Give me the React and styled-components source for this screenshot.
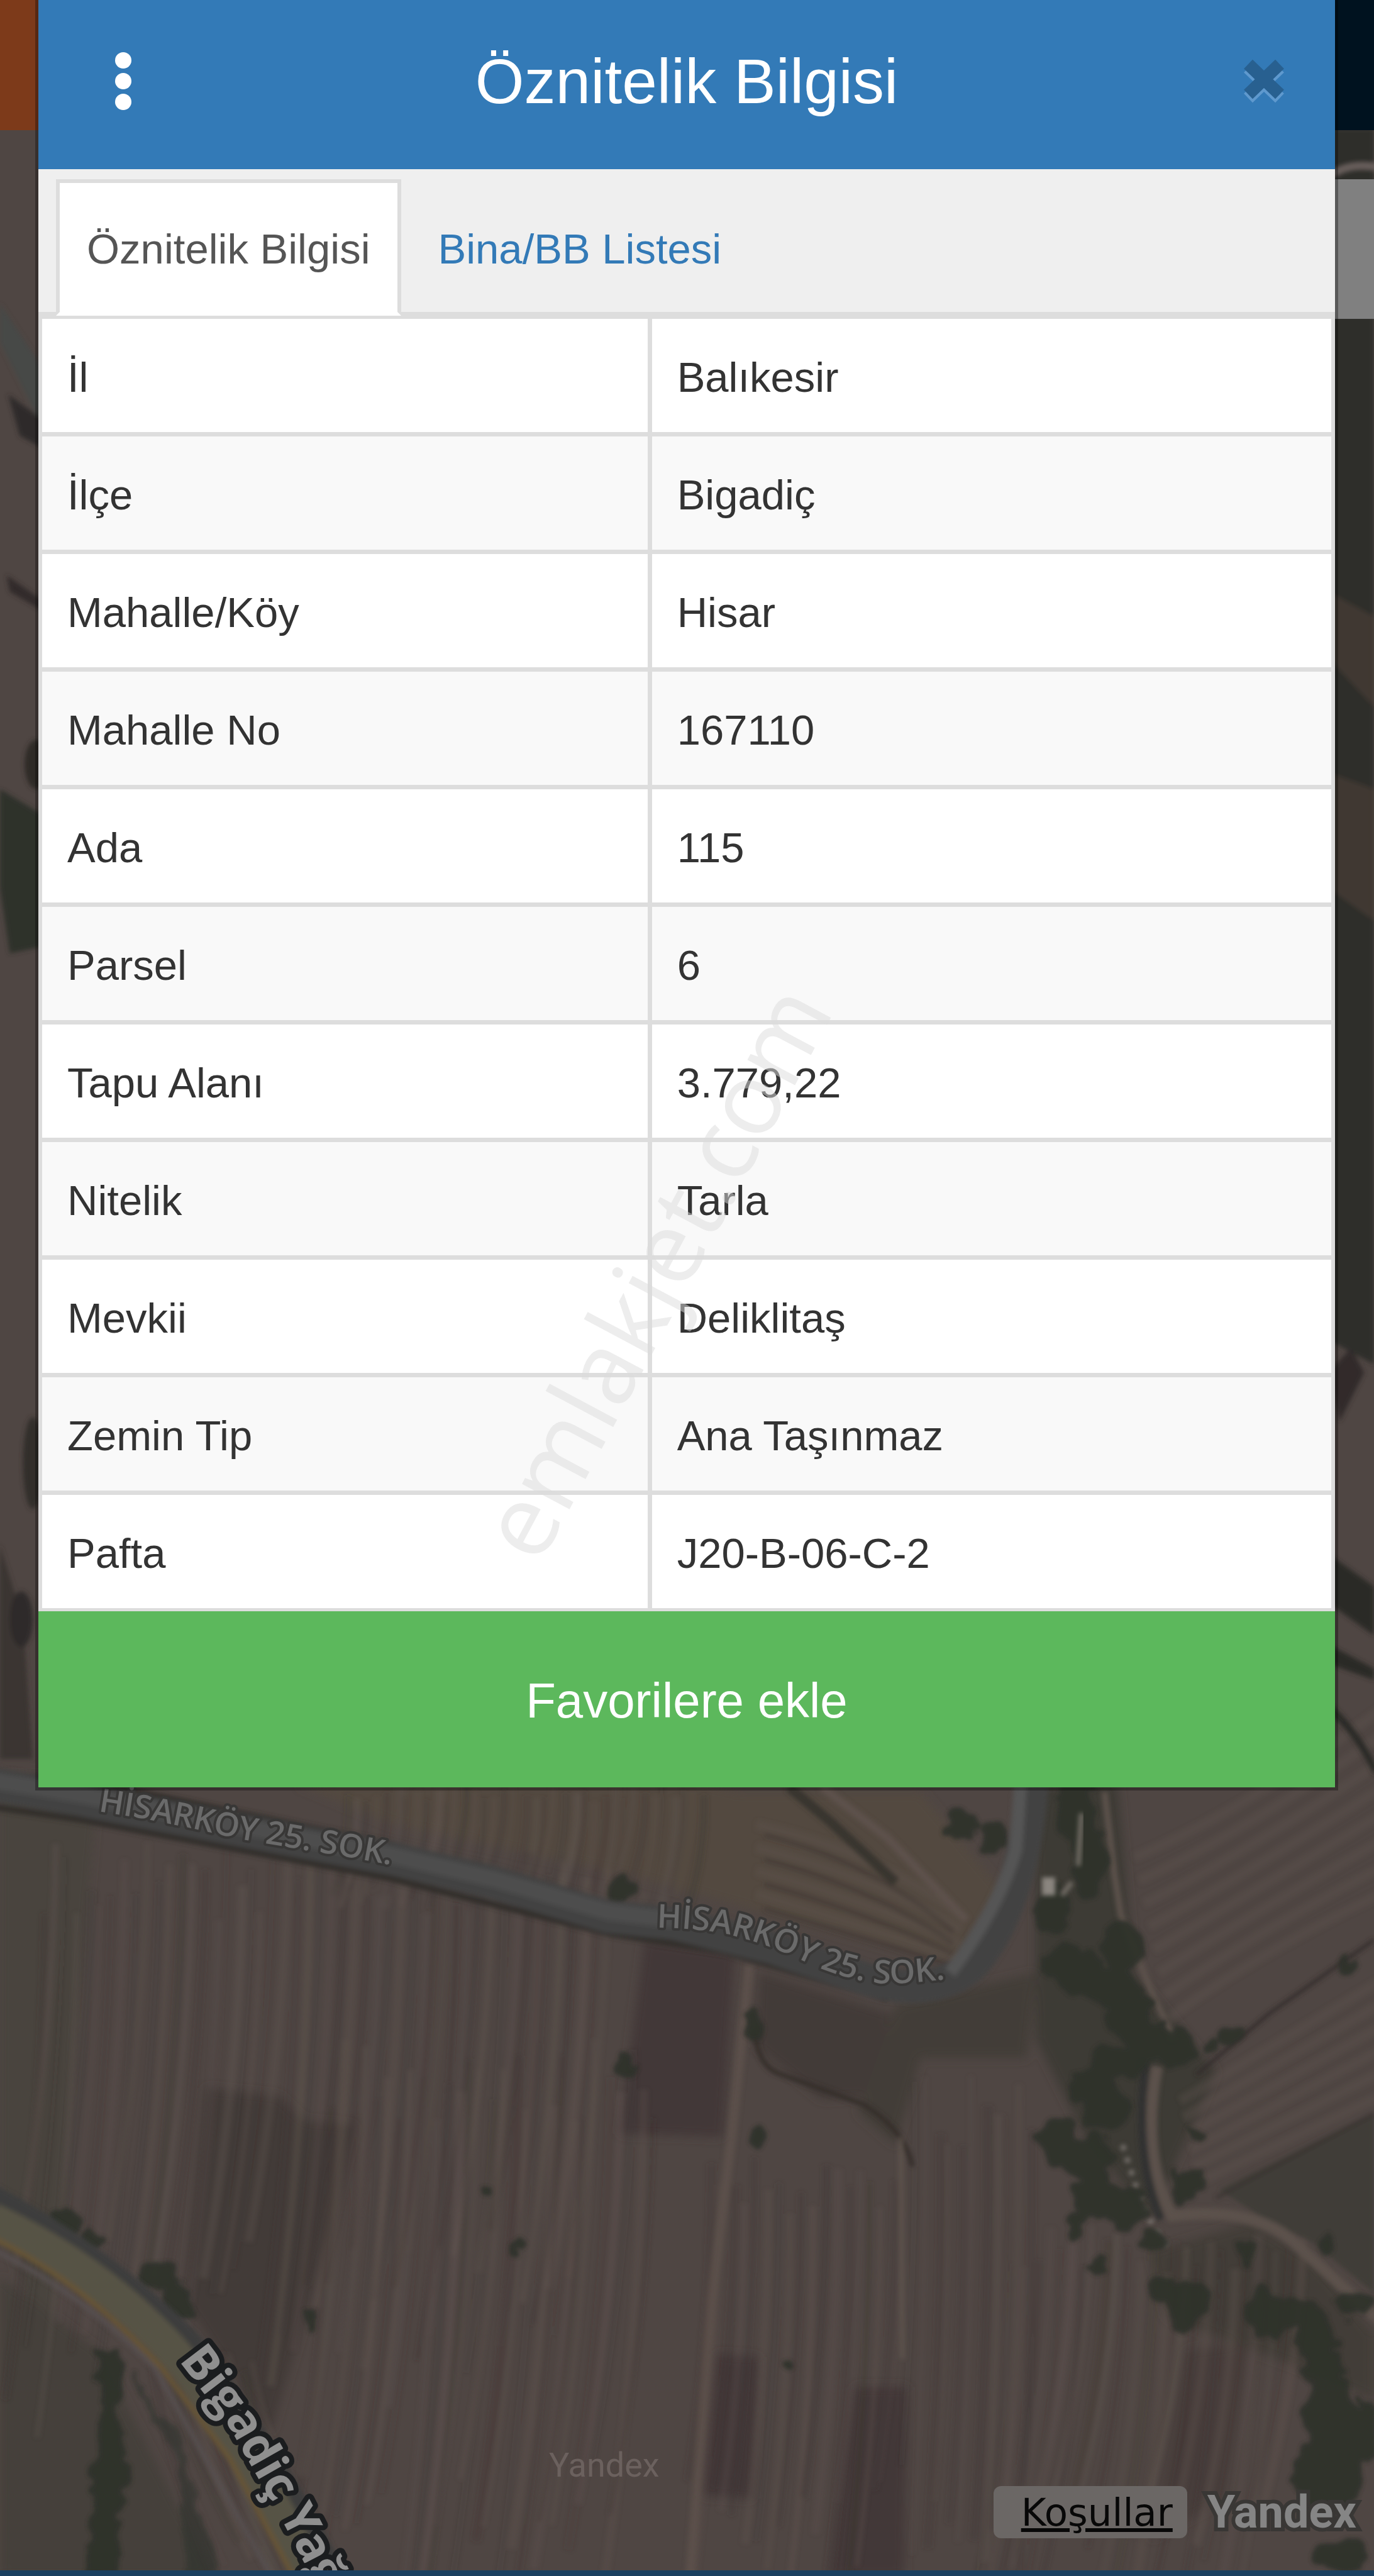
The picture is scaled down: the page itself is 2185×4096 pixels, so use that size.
import { useState } from "react";
import styled, { createGlobalStyle } from "styled-components";

const rows = [
  ['İl', 'Balıkesir'],
  ['İlçe', 'Bigadiç'],
  ['Mahalle/Köy', 'Hisar'],
  ['Mahalle No', '167110'],
  ['Ada', '115'],
  ['Parsel', '6'],
  ['Tapu Alanı', '3.779,22'],
  ['Nitelik', 'Tarla'],
  ['Mevkii', 'Deliklitaş'],
  ['Zemin Tip', 'Ana Taşınmaz'],
  ['Pafta', 'J20-B-06-C-2'],
];

const rnd = (i) => {
  const v = Math.sin(i * 127.1 + 11.7) * 43758.5453;
  return v - Math.floor(v);
}

// plough lines of a field: dx is how far a line leans over its length
const Furrows = ({ x, y, w, h, dx, step = 7, seed = 1, angle = 0 }) => {
  const lines = [];
  for (let i = 0; i * step < w; i++) {
    const r = rnd(i + seed * 31);
    const sx = x + i * step + r * 4;
    const top = y + rnd(i + seed * 57) * h * 0.15;
    const len = h * (0.7 + rnd(i + seed * 13) * 0.3);
    lines.push(
      <path
        key={i}
        d={`M${sx} ${top} q${dx * 0.2 + 3} ${len / 2} ${dx} ${len}`}
        stroke={i % 2 ? '#665a54' : '#3d3432'}
        strokeWidth={2 + r * 4}
        opacity={0.1 + rnd(i + seed * 77) * 0.25}
      />
    );
  }
  return <g fill="none" transform={`rotate(${angle} ${x} ${y})`}>{lines}</g>;
}

const trees = [
  [378, 1149, 10, 8], [381, 1257, 7, 8], [459, 1233, 6, 9], [460, 1301, 7, 7],
  [296, 1333, 4, 4], [315, 1367, 3, 5], [189, 1410, 4, 5], [40, 1350, 10, 9],
  [56, 1363, 8, 7], [98, 1386, 14, 9], [108, 1400, 9, 10], [480, 1440, 4, 5],
  [585, 1110, 11, 9], [604, 1118, 9, 12], [655, 1100, 13, 22], [663, 1130, 10, 26],
  [641, 1162, 11, 14], [682, 1184, 13, 15], [652, 1198, 18, 15], [675, 1209, 20, 12],
  [686, 1225, 13, 13], [697, 1240, 14, 13], [716, 1247, 12, 12], [680, 1256, 16, 10],
  [664, 1268, 15, 12], [673, 1285, 14, 14], [645, 1302, 13, 15], [664, 1312, 16, 13],
  [667, 1336, 15, 14], [686, 1345, 13, 13], [655, 1354, 7, 10], [701, 1363, 8, 7],
  [668, 1377, 5, 6], [722, 1328, 10, 11], [728, 1298, 4, 4], [748, 1238, 7, 6],
  [738, 1244, 5, 4], [707, 1392, 9, 8], [722, 1402, 14, 14], [771, 1408, 13, 15],
  [790, 1408, 14, 11], [757, 1371, 5, 7], [800, 1424, 13, 14], [804, 1440, 13, 10],
  [808, 1470, 17, 25], [806, 1505, 20, 22], [815, 1497, 15, 30], [830, 1480, 8, 20],
  [824, 1400, 12, 9], [806, 1363, 5, 6], [817, 1555, 18, 10], [820, 1195, 5, 5],
];

const Terrain = () => (
  <Fill viewBox="0 0 836 1567" preserveAspectRatio="xMidYMid slice" aria-hidden="true">
    <defs>
      <filter id="soft" x="-5%" y="-5%" width="110%" height="110%"><feGaussianBlur stdDeviation="1.4" /></filter>
      <filter id="softer" x="-5%" y="-5%" width="110%" height="110%"><feGaussianBlur stdDeviation="3" /></filter>
      <filter id="rough" x="-5%" y="-5%" width="110%" height="110%">
        <feTurbulence type="fractalNoise" baseFrequency="0.08" numOctaves="2" seed="4" />
        <feDisplacementMap in="SourceGraphic" scale="14" xChannelSelector="R" yChannelSelector="G" />
        <feGaussianBlur stdDeviation="1.2" />
      </filter>
    </defs>
    <rect width="836" height="1567" fill="#4f4643" />

    <g filter="url(#softer)">
      <path d="M0 1080H60L30 1440L0 1350Z" fill="#47433d" opacity=".7" />
      <path d="M125 1270L170 1275L185 1290L216 1293L200 1360L165 1480L112 1400Z" fill="#433a38" />
      <path d="M392 1180L447 1188L440 1300L377 1298Z" fill="#433937" />
      <path d="M436 1432L462 1434L458 1520L427 1518Z" fill="#433937" />
      <path d="M520 1452L552 1452L550 1567L505 1567Z" fill="#433937" />
      <path d="M722 1430L760 1425L745 1520L700 1545Z" fill="#463d3b" />
      <path d="M462 1200L542 1225L530 1275L500 1277L460 1245Z" fill="#433a37" />
      <path d="M545 1220L630 1200L625 1252L560 1252L545 1305L522 1285Z" fill="#423e37" />
      <path d="M630 1085H680L690 1200L740 1260L700 1350L660 1300L630 1240Z" fill="#3d3a35" />
      <path d="M700 1370L760 1352L800 1375L836 1420V1460L790 1440L710 1410Z" fill="#433e38" />
      <path d="M0 1385L60 1430L130 1567H0Z" fill="#443f3b" />
      <path d="M180 1085L430 1085L450 1090L560 1090L610 1150L580 1195L470 1165L380 1140L240 1110Z" fill="#53483f" />
    </g>

    <g filter="url(#soft)">
      <Furrows x={25} y={1120} w={350} h={320} dx={-24} seed={2} />
      <Furrows x={200} y={1240} w={200} h={340} dx={-26} seed={3} />
      <Furrows x={210} y={1085} w={220} h={75} dx={-10} seed={4} step={6} />
      <Furrows x={430} y={1310} w={120} h={260} dx={-14} seed={5} />
      <Furrows x={555} y={1262} w={75} h={300} dx={-8} seed={6} />
      <Furrows x={615} y={1350} w={180} h={220} dx={-24} seed={7} />
      <Furrows x={90} y={1430} w={70} h={140} dx={40} seed={8} />
      <g fill="none" stroke="#62564f" strokeWidth="6" opacity=".3">
        {[0, 1, 2, 3, 4, 5, 6, 7].map(i => <path key={i} d={`M${690 + i * 3} ${1130 + i * 14} Q760 ${1100 + i * 13} 840 ${1040 + i * 16}`} />)}
        {[0, 1, 2, 3, 4, 5].map(i => <path key={i} d={`M${718 + i * 2} ${1278 + i * 10} L840 ${1205 + i * 14}`} />)}
        {[0, 1, 2, 3].map(i => <path key={i} d={`M460 ${1110 + i * 14} Q530 ${1125 + i * 16} 585 ${1165 + i * 9}`} />)}
      </g>
      <g fill="none" stroke="#3a312f" strokeWidth="3" opacity=".4">
        {[0, 1, 2, 3].map(i => <path key={i} d={`M465 ${1116 + i * 15} Q530 ${1132 + i * 16} 580 ${1175 + i * 7}`} />)}
      </g>
      <path d="M500 1087L540 1118L588 1168" fill="none" stroke="#5d514b" strokeWidth="5" />
      <path d="M480 1087L505 1108L545 1145" fill="none" stroke="#38342e" strokeWidth="6" />
      <path d="M742 1332L836 1285V1395L800 1365L770 1350Z" fill="#403d38" />
      <path d="M456 1195L445 1300L433 1400L420 1567" fill="none" stroke="#63564f" strokeWidth="6" opacity=".6" />
      <path d="M459 1235Q461 1256 473 1261L525 1280Q551 1296 555 1318" fill="none" stroke="#352e2b" strokeWidth="3" />
      <path d="M548 1300L549 1435" fill="none" stroke="#665a52" strokeWidth="3" opacity=".6" />
      <path d="M836 1180L772 1225L728 1262" fill="none" stroke="#332c2a" strokeWidth="2" />
      <path d="M836 1286L740 1337" fill="none" stroke="#3a3431" strokeWidth="2" />
      <path d="M672 1090L678 1140L682 1165L700 1210L714 1240" fill="none" stroke="#5b514b" strokeWidth="4" />
      <path d="M704 1257Q694 1310 713 1348Q760 1342 785 1362L840 1412" fill="none" stroke="#5b514c" strokeWidth="7" />
      <path d="M697 1255Q690 1310 706 1350" fill="none" stroke="#303130" strokeWidth="5" />
      <path d="M683 1305L696 1345L712 1370" fill="none" stroke="#7d7772" strokeWidth="3" strokeDasharray="3 5" />
    </g>

    <g filter="url(#rough)" fill="#2f302c" opacity=".92">
      {trees.map(([x, y, rx, ry]) => <ellipse key={`${x}-${y}`} cx={x} cy={y} rx={rx} ry={ry} />)}
      <path d="M60 1430L76 1430L72 1470L78 1500L70 1567H54L56 1500L62 1470Z" />
      <path d="M80 1443L108 1480L120 1520L132 1567H114L108 1500Z" opacity=".6" />
    </g>
    <g filter="url(#soft)">
      <path d="M658 1103L656 1135M652 1145L646 1153" stroke="#706a63" strokeWidth="3" fill="none" />
      <rect x="634" y="1142" width="8" height="11" fill="#8a857f" />
    </g>

    <g filter="url(#soft)" fill="none">
      <path d="M-5 1078L60 1085L240 1122L370 1158L420 1163" stroke="#2e2a28" strokeWidth="3" />
      <path d="M-5 1099L50 1107L235 1142L370 1176L440 1187L540 1216" stroke="#332e2c" strokeWidth="4" />
      <path d="M-5 1085L50 1095L150 1114L240 1131L300 1145L370 1166L410 1170L470 1185L530 1205Q570 1215 592 1195Q622 1160 628 1085" stroke="#424342" strokeWidth="20" />
      <path d="M-5 1083L50 1092L240 1129L300 1143L370 1163L410 1168" stroke="#4e4e4e" strokeWidth="10" />
      <path d="M578 1200Q608 1160 618 1125L621 1085" stroke="#555455" strokeWidth="8" />
      <path d="M-5 1336Q60 1370 115 1424Q165 1490 205 1570" stroke="#3c3e3d" strokeWidth="14" />
      <path d="M-5 1368Q50 1395 94 1440L165 1567" stroke="#574f4f" strokeWidth="3" />
      <path d="M-5 1350Q60 1380 107 1432Q150 1485 190 1570" stroke="#575345" strokeWidth="20" />
      <path d="M-5 1361Q50 1388 98 1440L140 1496L180 1570" stroke="#675535" strokeWidth="3" />
    </g>

    {/* slivers of the map on both sides of the dialog */}
    <g filter="url(#soft)">
      <path d="M0 185L30 230V268L0 208Z" fill="#464847" />
      <path d="M5 240L30 258V275L12 265Z" fill="#2e2c29" />
      <path d="M4 350L30 368V374L6 360Z" fill="#302b29" />
      <ellipse cx="22" cy="465" rx="7" ry="15" fill="#2e2a28" />
      <path d="M0 480L30 498V575L6 580L0 540Z" fill="#2d302a" />
      <ellipse cx="20" cy="890" rx="6" ry="28" fill="#322d2a" />
      <path d="M0 940L14 985L20 1070H0Z" fill="#3b3532" />
      <ellipse cx="13" cy="985" rx="7" ry="17" fill="#2f2b29" />
      <path d="M808 78H836V830L808 815Z" fill="#2e2d2a" />
      <path d="M808 108Q820 98 840 102" stroke="#6b615d" strokeWidth="4" fill="none" />
      <path d="M808 360L836 375V430L808 400ZM808 470L836 480V560L808 540Z" fill="#3f3733" />
      <path d="M808 945L836 965V995L808 975ZM808 1000L836 1015L836 1022L808 1012ZM808 1035Q826 1050 838 1075L836 1080Q822 1052 808 1042Z" fill="#2c2a28" />
      <path d="M808 835L822 820L830 835L815 865Z" fill="#302c2a" />
    </g>
  </Fill>
);

const Labels = () => (
  <Fill viewBox="0 0 2185 4096" preserveAspectRatio="xMidYMid slice" aria-hidden="true">
    <defs>
      <path id="street1" d="M156 2880L230 2892L300 2906L380 2924L481 2941L544 2951L700 2980" />
      <path id="street2" d="M1044 3065Q1105 3066 1154 3075Q1210 3088 1269 3114Q1340 3149 1405 3154Q1450 3155 1560 3140" />
      <path id="avenue" d="M284 3753L364 3858L411 3941L450 4010L520 4145" />
    </defs>
    <Street><textPath href="#street1">HİSARKÖY 25. SOK.</textPath></Street>
    <Street><textPath href="#street2">HİSARKÖY 25. SOK.</textPath></Street>
    <Avenue><textPath href="#avenue">Bigadiç Yağ</textPath></Avenue>
    <Faint x="873" y="3938">Yandex</Faint>
  </Fill>
);

const App = () => {
  const [tab, setTab] = useState('info');

  return (
    <>
      <GlobalStyle />
      <Page>
        <Backdrop>
          <Terrain />
          <Labels />
          <TopBar />
          <SideBox />
        </Backdrop>

        <Dialog role="dialog" aria-labelledby="title">
          <Header>
            <IconButton aria-label="Menü">
              <svg width="70" height="100" viewBox="0 0 70 100" fill="#fff">
                <circle cx="35" cy="17" r="13" />
                <circle cx="35" cy="50" r="13" />
                <circle cx="35" cy="83" r="13" />
              </svg>
            </IconButton>
            <Title id="title">Öznitelik Bilgisi</Title>
            <IconButton aria-label="Kapat" $end>
              <svg width="70" height="76" viewBox="0 0 70 76" fill="none" strokeWidth="20" strokeLinejoin="round">
                <path d="M10 17L60 65M60 17L10 65" stroke="#5f99ce" />
                <path d="M10 11L60 59M60 11L10 59" stroke="#286090" />
              </svg>
            </IconButton>
          </Header>

          <Tabs role="tablist">
            <Tab role="tab" aria-selected={tab === 'info'} $on={tab === 'info'} onClick={() => setTab('info')}>Öznitelik Bilgisi</Tab>
            <Tab role="tab" aria-selected={tab === 'list'} $on={tab === 'list'} onClick={() => setTab('list')}>Bina/BB Listesi</Tab>
          </Tabs>

          <Table>
            <tbody>
              {rows.map(([name, value]) => (
                <Row key={name}>
                  <Name scope="row">{name}</Name>
                  <Value>{value}</Value>
                </Row>
              ))}
            </tbody>
          </Table>

          <AddButton>Favorilere ekle</AddButton>
        </Dialog>

        <Copyright>
          <Terms href="#kosullar">Koşullar</Terms>
          <Brand>Yandex</Brand>
        </Copyright>
        <BottomBar />

        <Watermark viewBox="0 0 2185 4096" preserveAspectRatio="xMidYMid slice" aria-hidden="true">
          <text transform="translate(857 2491) rotate(-62)">emlakjet.com</text>
        </Watermark>
      </Page>
    </>
  )
}

const GlobalStyle = createGlobalStyle`
  * {
    box-sizing: border-box;
  }
  body {
    margin: 0;
    background: #4f4643;
    font-family: "Liberation Sans", Arial, sans-serif;
  }
  button {
    font-family: inherit;
    border: 0;
    cursor: pointer;
  }
`

const Page = styled.main`
  position: relative;
  min-height: 100vh;
  display: flex;
  flex-direction: column;
  overflow: hidden;
`

const Backdrop = styled.div`
  position: absolute;
  inset: 0;
`

const Fill = styled.svg`
  position: absolute;
  inset: 0;
  width: 100%;
  height: 100%;
`

const Street = styled.text`
  font: 600 52px "Open Sans", sans-serif;
  fill: #6a6a6a;
  stroke: #383736;
  stroke-width: 8px;
  stroke-linejoin: round;
  paint-order: stroke;
`

const Avenue = styled.text`
  font: 700 76px "Open Sans", sans-serif;
  fill: #8f8f8f;
  stroke: #1b1d1f;
  stroke-width: 16px;
  stroke-linejoin: round;
  paint-order: stroke;
`

const Faint = styled.text`
  font: 400 54px Roboto, sans-serif;
  fill: #6b615e;
`

const TopBar = styled.div`
  position: absolute;
  top: 0;
  left: 0;
  right: 0;
  height: 207px;
  background: linear-gradient(to right, #7d3a1a 50%, #00121f 50%);
`

const SideBox = styled.div`
  position: absolute;
  top: 285px;
  right: 0;
  width: 200px;
  height: 222px;
  background: #808080;
`

const Dialog = styled.section`
  position: relative;
  margin: 0 62px 0 61px;
  background: #fff;
  box-shadow: 0 0 0 5px rgba(0, 0, 0, 0.3);
`

const Header = styled.header`
  display: grid;
  grid-template-columns: 1fr auto 1fr;
  align-items: center;
  height: 269px;
  padding-bottom: 12px;
  background: #337ab7;
`

const Title = styled.h1`
  margin: 0;
  font-size: 100px;
  line-height: 120px;
  font-weight: 400;
  color: #fff;
`

const IconButton = styled.button`
  justify-self: ${(props) => props.$end ? 'end' : 'start'};
  padding: ${(props) => props.$end ? '0 78px 0 0' : '0 0 0 100px'};
  background: none;
  svg {
    display: block;
  }
`

const Tabs = styled.div`
  display: flex;
  gap: 10px;
  padding: 16px 28px 0;
  background: #efefef;
  border-bottom: 6px solid #ddd;
`

const Tab = styled.button`
  height: 217px;
  margin-bottom: -6px;
  padding: 4px 43px 0;
  border: 6px solid ${(props) => props.$on ? '#ddd' : 'transparent'};
  border-bottom-color: ${(props) => props.$on ? '#fff' : 'transparent'};
  background: ${(props) => props.$on ? '#fff' : 'transparent'};
  color: ${(props) => props.$on ? '#555' : '#337ab7'};
  font-size: 67px;
`

const Table = styled.table`
  width: 100%;
  table-layout: fixed;
  border-collapse: separate;
  border-spacing: 0;
  border: 5px solid #ddd;
  border-width: 5px 6px;
  color: #333;
  font-size: 67px;
  line-height: 100px;
`

const Row = styled.tr`
  background: #fff;
  &:nth-child(even) {
    background: #f9f9f9;
  }
  &:last-child > * {
    border-bottom: 0;
  }
`

const Name = styled.th`
  width: 47.3%;
  padding: 43px 40px 37px;
  text-align: left;
  font-weight: 400;
  border-right: 7px solid #ddd;
  border-bottom: 7px solid #ddd;
`

const Value = styled.td`
  padding: 43px 40px 37px;
  border-bottom: 7px solid #ddd;
`

const AddButton = styled.button`
  display: block;
  width: 100%;
  height: 280px;
  padding: 4px 0 0;
  background: #5cb85c;
  color: #fff;
  font-size: 78px;
`

const Copyright = styled.footer`
  position: relative;
  display: flex;
  align-items: center;
  justify-content: flex-end;
  gap: 32px;
  margin-top: auto;
  padding: 0 28px 51px;
`

const Terms = styled.a`
  padding: 0 23px 0 44px;
  border-radius: 12px;
  background: #6b6765;
  color: #080808;
  font: 61px/83px "DejaVu Sans", sans-serif;
`

const Brand = styled.span`
  color: #858585;
  font: 700 72px/83px Roboto, sans-serif;
  -webkit-text-stroke: 12px #393735;
  paint-order: stroke;
`

const BottomBar = styled.div`
  position: relative;
  height: 9px;
  background: #1b4060;
`

const Watermark = styled(Fill)`
  pointer-events: none;
  text {
    font: 400 160px "Open Sans", sans-serif;
    fill: rgba(220, 220, 220, 0.5);
  }
`

export default App;
